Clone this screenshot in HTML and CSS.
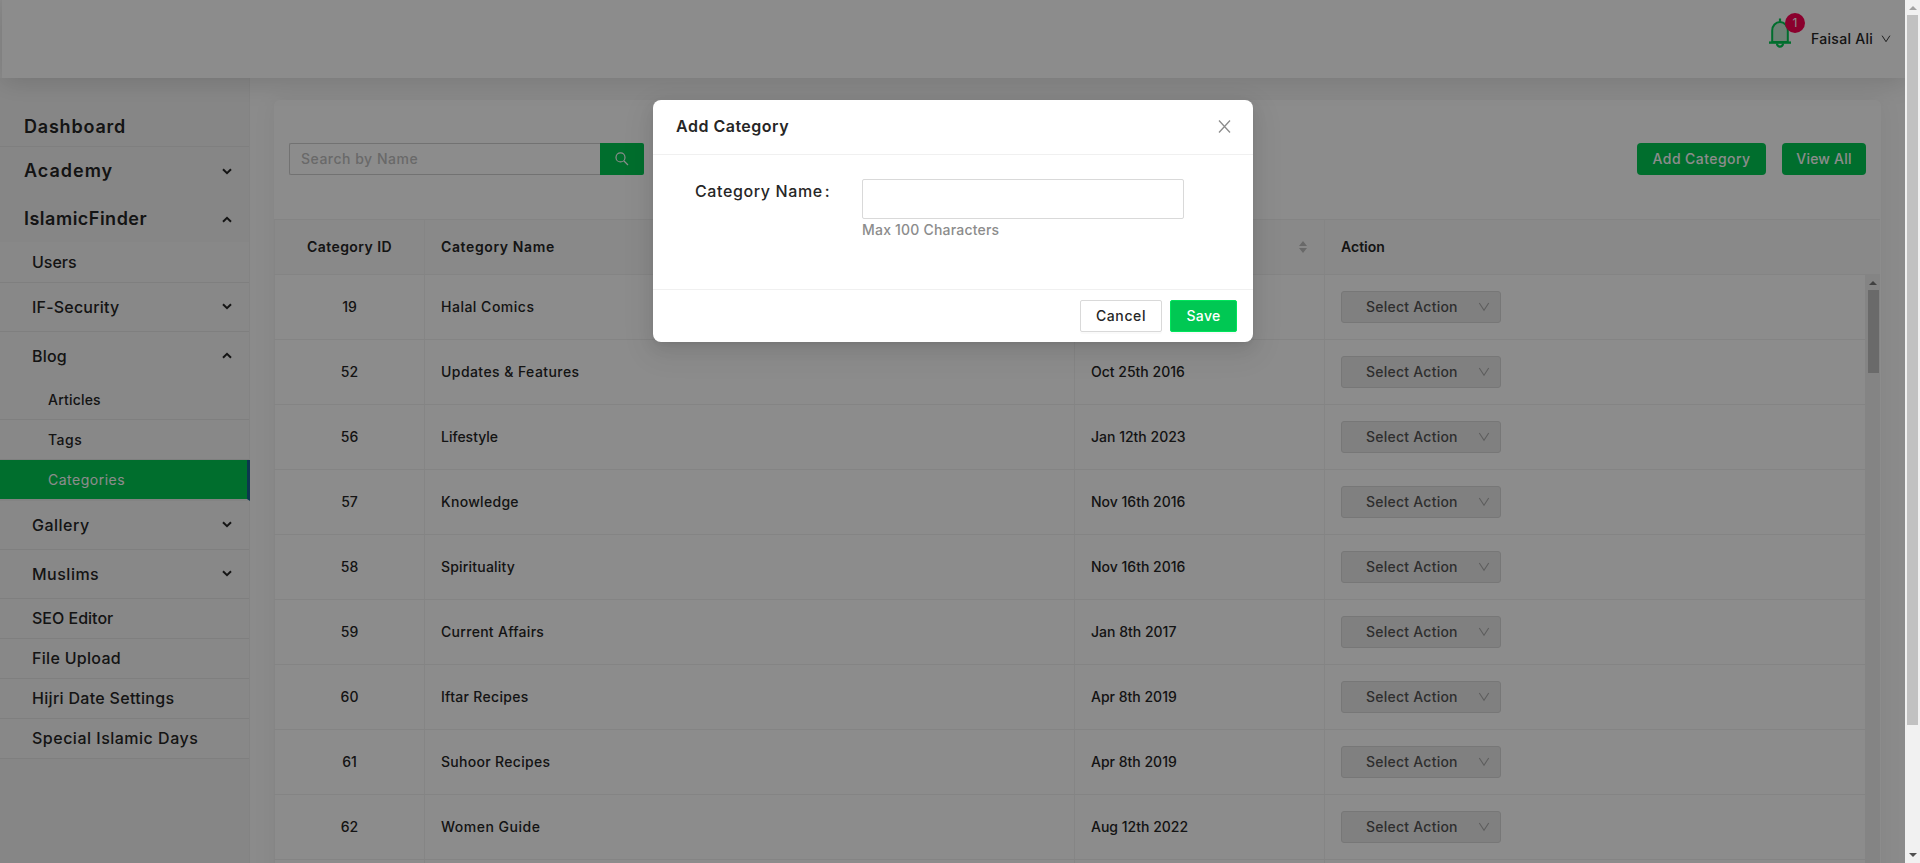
FILE: index.html
```html
<!DOCTYPE html>
<html lang="en">
<head>
<meta charset="utf-8">
<title>Categories</title>
<link rel="stylesheet" href="styles.css">
</head>
<body>
<svg class="defs" aria-hidden="true">
  <symbol id="chev" viewBox="0 0 10 7"><path d="M1 1.2 5 5.2 9 1.2" fill="none" stroke="currentColor" stroke-width="2"/></symbol>
  <symbol id="down" viewBox="0 0 12 12"><path d="M1.3 2 6 9.2 10.7 2" fill="none" stroke="currentColor" stroke-width="1.1"/></symbol>
</svg>
<div class="screen">
  <div class="app">
    <header class="header">
      <div class="bell">
        <svg width="24" height="32" viewBox="0 0 24 32"><path d="M4.2 25V13.5a7.8 8.5 0 0 1 15.6 0V25z" fill="#c9ecd6" stroke="#00c853" stroke-width="2"/><path d="M1 25.6h22" fill="none" stroke="#00c853" stroke-width="2.4"/><path d="M12 6V1.5M9 26.5a3 3.2 0 0 0 6 0" fill="none" stroke="#00c853" stroke-width="2.2"/></svg>
        <span class="badge">1</span>
      </div>
      <span class="user t3">Faisal Ali</span>
      <svg class="user-arrow"><use href="#down"/></svg>
    </header>
    <div class="body">
      <nav class="side">
        <div class="top dash t8">Dashboard</div>
        <div class="top t10">Academy<svg><use href="#chev"/></svg></div>
        <div class="top t5">IslamicFinder<svg class="up"><use href="#chev"/></svg></div>
        <div class="sub">
          <div class="item first">Users</div>
          <div class="item tall t2">IF-Security<svg><use href="#chev"/></svg></div>
          <div class="item tall open t2">Blog<svg class="up"><use href="#chev"/></svg></div>
          <div class="leaf t2">Articles</div>
          <div class="leaf t5">Tags</div>
          <div class="leaf active t5">Categories</div>
          <div class="item tall t5">Gallery<svg><use href="#chev"/></svg></div>
          <div class="item tall t5">Muslims<svg><use href="#chev"/></svg></div>
          <div class="item">SEO Editor</div>
          <div class="item t3">File Upload</div>
          <div class="item t3">Hijri Date Settings</div>
          <div class="item t5">Special Islamic Days</div>
        </div>
      </nav>
      <main class="card">
        <div class="tools">
          <div class="search"><span class="field t5">Search by Name</span><span class="go"><svg width="14" height="14" viewBox="0 0 14 14"><path d="M9 9l4 4M10 5.4a4.5 4.5 0 1 1-9 0 4.5 4.5 0 0 1 9 0z" fill="none" stroke="#fff" stroke-width="1.2"/></svg></span></div>
          <div class="actions"><span class="btn add t4">Add Category</span><span class="btn view t2">View All</span></div>
        </div>
        <div class="row head"><div class="id t4">Category ID</div><div class="name t6">Category Name</div><div class="date"><svg width="8" height="12" viewBox="0 0 8 12"><path d="M4 0 8 5H0zM0 7h8l-4 5z" fill="#bfbfbf"/></svg></div><div class="act">Action</div></div>
        <div class="scroll">
          <div class="rows">
            <div class="row"><div class="id">19</div><div class="name t5">Halal Comics</div><div class="date"></div><div class="act"><span class="select">Select Action<svg><use href="#down"/></svg></span></div></div>
            <div class="row"><div class="id">52</div><div class="name t4">Updates &amp; Features</div><div class="date">Oct 25th 2016</div><div class="act"><span class="select">Select Action<svg><use href="#down"/></svg></span></div></div>
            <div class="row"><div class="id">56</div><div class="name">Lifestyle</div><div class="date">Jan 12th 2023</div><div class="act"><span class="select">Select Action<svg><use href="#down"/></svg></span></div></div>
            <div class="row"><div class="id">57</div><div class="name t3">Knowledge</div><div class="date">Nov 16th 2016</div><div class="act"><span class="select">Select Action<svg><use href="#down"/></svg></span></div></div>
            <div class="row"><div class="id">58</div><div class="name t2">Spirituality</div><div class="date">Nov 16th 2016</div><div class="act"><span class="select">Select Action<svg><use href="#down"/></svg></span></div></div>
            <div class="row"><div class="id">59</div><div class="name t3">Current Affairs</div><div class="date">Jan 8th 2017</div><div class="act"><span class="select">Select Action<svg><use href="#down"/></svg></span></div></div>
            <div class="row"><div class="id">60</div><div class="name t3">Iftar Recipes</div><div class="date">Apr 8th 2019</div><div class="act"><span class="select">Select Action<svg><use href="#down"/></svg></span></div></div>
            <div class="row"><div class="id">61</div><div class="name t3">Suhoor Recipes</div><div class="date">Apr 8th 2019</div><div class="act"><span class="select">Select Action<svg><use href="#down"/></svg></span></div></div>
            <div class="row"><div class="id">62</div><div class="name t5">Women Guide</div><div class="date">Aug 12th 2022</div><div class="act"><span class="select">Select Action<svg><use href="#down"/></svg></span></div></div>
            <div class="row"><div class="id"></div><div class="name"></div><div class="date"></div><div class="act"></div></div>
          </div>
          <div class="inner-bar"><i class="tri"></i><i class="inner-thumb"></i></div>
        </div>
      </main>
    </div>
    <div class="mask">
      <section class="modal">
        <div class="modal-head"><span class="t5">Add Category</span><svg width="13" height="13" viewBox="0 0 13 13"><path d="M1 .5l11 12M12 .5l-11 12" fill="none" stroke="#8c8c8c" stroke-width="1.3"/></svg></div>
        <div class="modal-body">
          <label class="label t6">Category Name<span class="colon">:</span></label>
          <div class="control"><div class="input"></div><div class="help t2">Max 100 Characters</div></div>
        </div>
        <div class="modal-foot"><span class="mbtn cancel t6">Cancel</span><span class="mbtn save t3">Save</span></div>
      </section>
    </div>
  </div>
  <div class="page-bar"><i class="tri pale"></i><i class="thumb"></i><i class="tri bottom"></i></div>
</div>
</body>
</html>
```
FILE: styles.css
```css
* { box-sizing: border-box; }
body { margin: 0; font: 500 14px/20px Inter, "Open Sans", sans-serif; color: #262626; overflow: hidden; }
.defs { position: absolute; width: 0; height: 0; }
.screen { display: flex; width: 1920px; height: 863px; overflow: hidden; }
.app { position: relative; display: flex; flex-direction: column; width: 1905px; height: 863px; overflow: hidden; background: #fdfdfd; }

/* tracking steps */
.t2 { letter-spacing: .2px; }
.t3 { letter-spacing: .3px; }
.t4 { letter-spacing: .43px; }
.t5 { letter-spacing: .5px; }
.t6 { letter-spacing: .62px; }
.t8 { letter-spacing: .8px; }
.t10 { letter-spacing: 1px; }

.header { position: relative; z-index: 1; display: flex; justify-content: flex-end; height: 78px; flex: none; margin-left: 2px; padding-right: 14px; background: #fff; box-shadow: 0 4px 24px rgba(0, 0, 0, .14); }
.bell { position: relative; width: 24px; height: 32px; margin: 17px 19px 0 0; }
.badge { position: absolute; left: 17px; top: -4px; width: 20px; height: 20px; border-radius: 10px; background: #fb0052; color: #fff; font-size: 12px; line-height: 20px; text-align: center; font-weight: 400; }
.user { margin-top: 29px; width: 70px; white-space: nowrap; }
.user-arrow { width: 10px; height: 10px; margin-top: 34px; }

.body { display: flex; height: 785px; flex: none; }
.side { width: 250px; flex: none; padding-top: 25px; background: #f5f5f5; border-right: 1px solid #efefef; }
.side svg { width: 10px; height: 7px; }
.side .up { transform: rotate(180deg); }
.top, .item { display: flex; align-items: center; justify-content: space-between; padding-right: 17px; }
.top { height: 48px; padding-left: 24px; font-size: 18px; font-weight: 600; }
.top.dash { height: 44px; padding-top: 4px; border-bottom: 1px solid #e8e8e8; }
.sub { background: #f8f8f8; margin-top: -1px; }
.item { height: 40px; padding-left: 32px; padding-bottom: 1px; font-size: 16px; border-bottom: 1px solid #e8e8e8; }
.item.first { height: 41px; padding-bottom: 0; }
.item.tall { height: 49px; }
.item.open { height: 48px; border-bottom: 0; }
.leaf { height: 40px; padding-left: 48px; line-height: 40px; font-size: 14px; border-bottom: 1px solid #e8e8e8; }
.leaf.active { height: 41px; margin-right: -1px; color: #fff; background: #00c853; background-clip: padding-box; border-right: 3px solid #17648e; border-bottom: 2px solid #efefef; font-weight: 400; }

.card { width: 1607px; height: 800px; margin: 22px 0 0 24px; flex: none; background: #fff; border-radius: 6px; box-shadow: 0 0 24px rgba(0, 0, 30, .06); }
.tools { display: flex; justify-content: space-between; height: 119px; padding: 43px 15px 0; }
.search { display: flex; width: 355px; height: 32px; }
.field { width: 311px; padding-left: 11px; line-height: 30px; color: #bfbfbf; border: 1px solid #d0d0d0; border-right: 0; border-radius: 2px 0 0 2px; }
.go { display: flex; align-items: center; justify-content: center; width: 44px; background: #00c853; border-radius: 0 2px 2px 0; }
.actions { display: flex; gap: 16px; }
.btn { height: 32px; line-height: 32px; text-align: center; color: #fff; background: #00c853; border-radius: 4px; }
.add { width: 129px; }
.view { width: 84px; }

.row { display: grid; grid-template-columns: 151px 650px 250px 1fr; height: 65px; }
.row > div { display: flex; align-items: center; padding-left: 16px; border-right: 1px solid #f2f2f2; border-bottom: 1px solid #f0f0f0; }
.row > .id { padding: 0; justify-content: center; border-left: 1px solid #f2f2f2; }
.row > .act { border-right: 0; }
.head { width: 1606px; height: 56px; background: #fafafa; font-weight: 600; }
.head > div { border-top: 1px solid #f0f0f0; }
.head .date { justify-content: flex-end; padding-right: 17px; }
.scroll { display: flex; width: 1606px; height: 588px; overflow: hidden; }
.rows { width: 1591px; flex: none; }
.select { display: flex; align-items: center; justify-content: space-between; width: 160px; height: 32px; padding: 0 10px 0 24px; color: #555; background: #e9e9e9; border: 1px solid #d9d9d9; border-radius: 3px; letter-spacing: .24px; }
.select svg { width: 12px; height: 12px; color: #aaa; }
.inner-bar { width: 15px; height: 589px; margin-top: -1px; padding: 7px 0 0 3px; background: #f0f0f0; }
.tri { display: block; width: 0; height: 0; border: 4px solid transparent; border-top: 0; border-bottom-color: #777; margin-left: 1px; }
.inner-thumb { display: block; width: 11px; height: 83px; margin-top: 5px; background: #c1c1c1; }

.mask { position: absolute; inset: 0; z-index: 2; padding: 100px 0 0 653px; background: rgba(0, 0, 0, .45); }
.modal { width: 600px; height: 242px; background: #fff; border-radius: 8px; box-shadow: 0 3px 6px -4px rgba(0, 0, 0, .12), 0 6px 16px rgba(0, 0, 0, .08), 0 9px 28px 8px rgba(0, 0, 0, .05); }
.modal-head { display: flex; align-items: center; justify-content: space-between; height: 55px; padding: 0 22px 2px 23px; border-bottom: 1px solid #f0f0f0; font-size: 16px; font-weight: 600; }
.modal-body { display: flex; height: 134px; padding: 24px 0 0 42px; }
.label { width: 167px; padding-top: 2px; font-size: 16px; }
.colon { margin-left: 2px; }
.input { width: 322px; height: 40px; border: 1px solid #d9d9d9; border-radius: 2px; }
.help { padding-top: 1px; color: #8c8c8c; }
.modal-foot { display: flex; justify-content: flex-end; gap: 8px; height: 53px; padding: 10px 16px; border-top: 1px solid #f0f0f0; }
.mbtn { height: 32px; line-height: 30px; text-align: center; border: 1px solid #d9d9d9; border-radius: 2px; box-shadow: 0 2px 0 rgba(0, 0, 0, .02); }
.cancel { width: 82px; }
.save { width: 67px; color: #fff; background: #00c853; border-color: #00e55b; }

.page-bar { display: flex; flex-direction: column; width: 15px; height: 863px; padding: 6px 0 6px 2px; background: #f1f1f1; }
.page-bar .tri { margin-left: 2px; }
.page-bar .pale { border-bottom-color: #a3a3a3; }
.thumb { width: 11px; height: 710px; margin-top: 5px; background: #c1c1c1; }
.page-bar .bottom { margin-top: auto; transform: rotate(180deg); border-bottom-color: #505050; }
```
